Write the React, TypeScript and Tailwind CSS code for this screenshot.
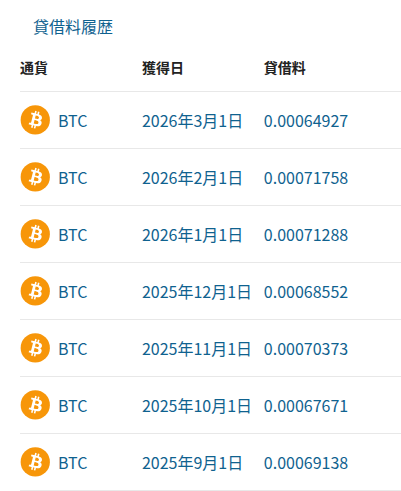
type LendingFee = {
  currency: string
  date: string
  fee: string
}

const lendingFees: LendingFee[] = [
  { currency: "BTC", date: "2026年3月1日", fee: "0.00064927" },
  { currency: "BTC", date: "2026年2月1日", fee: "0.00071758" },
  { currency: "BTC", date: "2026年1月1日", fee: "0.00071288" },
  { currency: "BTC", date: "2025年12月1日", fee: "0.00068552" },
  { currency: "BTC", date: "2025年11月1日", fee: "0.00070373" },
  { currency: "BTC", date: "2025年10月1日", fee: "0.00067671" },
  { currency: "BTC", date: "2025年9月1日", fee: "0.00069138" },
]

function BitcoinIcon() {
  return (
    <svg viewBox="0 0 32 32" className="size-[30px] shrink-0" aria-hidden="true">
      <circle cx="16.3" cy="15.9" r="15.6" fill="#f79609" />
      <path
        fill="#fff"
        transform="translate(1.4 .5) scale(.95)"
        d="M23.189 14.02c.314-2.096-1.283-3.223-3.465-3.975l.708-2.84-1.728-.43-.69 2.765c-.454-.114-.92-.22-1.385-.326l.695-2.783L15.596 6l-.708 2.839c-.376-.086-.746-.17-1.104-.26l.002-.009-2.384-.595-.46 1.846s1.283.294 1.256.312c.7.175.826.638.805 1.006l-.806 3.235c.048.012.11.03.18.057l-.183-.045-1.13 4.532c-.086.212-.303.531-.793.41.018.025-1.256-.313-1.256-.313l-.858 1.978 2.25.561c.418.105.828.215 1.231.318l-.715 2.872 1.727.43.708-2.84c.472.127.93.245 1.378.357l-.706 2.828 1.728.43.715-2.866c2.948.558 5.164.333 6.097-2.333.752-2.146-.037-3.385-1.588-4.192 1.13-.26 1.98-1.003 2.207-2.538zm-3.95 5.538c-.533 2.147-4.148.986-5.32.695l.95-3.805c1.172.293 4.929.872 4.37 3.11zm.535-5.569c-.487 1.953-3.495.96-4.47.717l.86-3.45c.975.243 4.118.696 3.61 2.733z"
      />
    </svg>
  )
}

export default function App() {
  return (
    <main className="bg-white pt-3 pl-5 font-['Noto_Sans_CJK_JP',sans-serif] text-[#0f628f]">
      <h1 id="fee-history" className="px-[13px] text-base leading-7">
        貸借料履歴
      </h1>

      <table aria-labelledby="fee-history" className="w-full table-fixed border-collapse text-left">
        <thead>
          <tr className="h-[51px] border-b border-[#e8e8e8] text-sm text-[#222]">
            <th className="w-[32%] pt-1 font-bold">通貨</th>
            <th className="w-[32%] pt-1 font-bold">獲得日</th>
            <th className="pt-1 font-bold">貸借料</th>
          </tr>
        </thead>
        <tbody>
          {lendingFees.map((item) => (
            <tr key={item.date} className="h-[57px] border-b border-[#e8e8e8] text-base">
              <td>
                <div className="flex items-center gap-2">
                  <BitcoinIcon />
                  <span>{item.currency}</span>
                </div>
              </td>
              <td className="whitespace-nowrap">{item.date}</td>
              <td>{item.fee}</td>
            </tr>
          ))}
        </tbody>
      </table>
    </main>
  )
}
